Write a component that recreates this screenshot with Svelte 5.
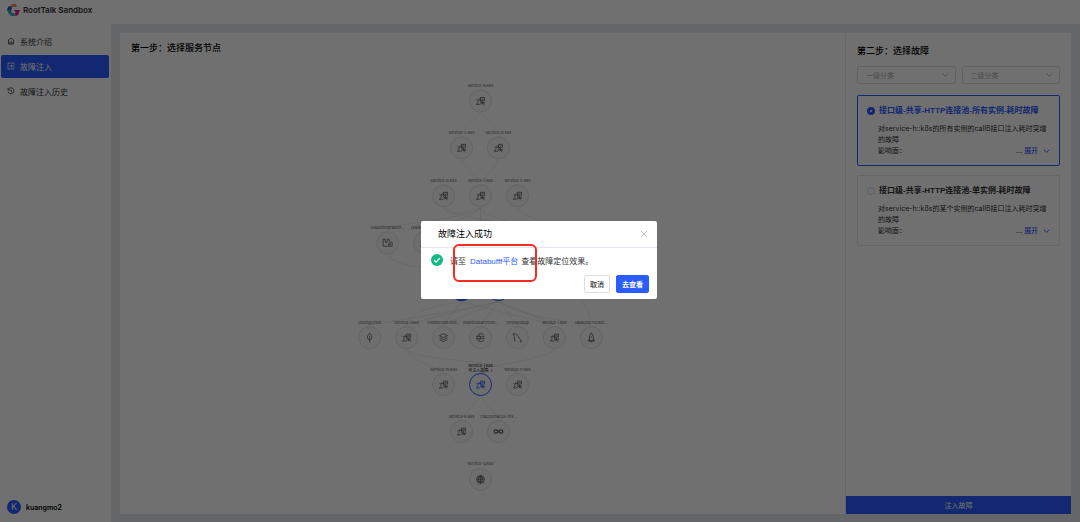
<script>
	const menu = [
		{ label: "系统介绍", icon: "home" },
		{ label: "故障注入", icon: "inject" },
		{ label: "故障注入历史", icon: "history" },
	]
	let current = "故障注入"

	const faults = [
		{ title: "接口级-共享-HTTP连接池-所有实例-耗时故障", desc: "对service-h::k8s的所有实例的callB接口注入耗时突增的故障" },
		{ title: "接口级-共享-HTTP连接池-单实例-耗时故障", desc: "对service-h::k8s的某个实例的callB接口注入耗时突增的故障" },
	]
	let picked = 0
	let open = true

	const nodes = [
		{ x: 361, y: 44, label: "service-a.k8s", icon: "svc" },
		{ x: 342, y: 91, label: "service-c.k8s", icon: "svc" },
		{ x: 379, y: 91, label: "service-d.k8s", icon: "svc" },
		{ x: 324, y: 139, label: "service-b.k8s", icon: "svc" },
		{ x: 361, y: 139, label: "service-f.k8s", icon: "svc" },
		{ x: 398, y: 139, label: "service-o.k8s", icon: "svc" },
		{ x: 268, y: 186, label: "[rabbitmq]rabbit...", icon: "rabbit" },
		{ x: 305, y: 186, label: "[kafka]kafka...", icon: "svc" },
		{ x: 342, y: 233, label: "", icon: "svc", state: "filled" },
		{ x: 379, y: 233, label: "", icon: "svc", state: "active" },
		{ x: 250, y: 281, label: "[mongo]test", icon: "leaf" },
		{ x: 287, y: 281, label: "service-i.k8s", icon: "svc" },
		{ x: 324, y: 281, label: "[redis]redis:test...", icon: "stack" },
		{ x: 361, y: 281, label: "[elasticsearch]es...", icon: "elastic" },
		{ x: 398, y: 281, label: "[mysql]bugl", icon: "mysql" },
		{ x: 435, y: 281, label: "service-l.k8s", icon: "svc" },
		{ x: 472, y: 281, label: "[apache-rocket...", icon: "rocket" },
		{ x: 324, y: 328, label: "service-m.k8s", icon: "svc" },
		{ x: 361, y: 328, label: "service-j.k8s", icon: "svc", state: "active", count: 2 },
		{ x: 398, y: 328, label: "service-n.k8s", icon: "svc" },
		{ x: 342, y: 375, label: "service-k.k8s", icon: "svc" },
		{ x: 379, y: 375, label: "[nacos]nacos-ms...", icon: "loop" },
		{ x: 361, y: 423, label: "service-q.k8s", icon: "globe" },
	]

	const edges = [
		"M361 56L342 75", "M361 56L379 75",
		"M342 103Q345 110 361 124", "M379 103Q377 110 361 124",
		"M324 151Q330 162 361 151", "M324 151Q340 161 398 168",
		"M361 151Q360 158 268 170", "M361 151Q350 164 305 170",
		"M361 151Q364 162 420 170", "M398 151Q400 160 450 172",
		"M361 151V190", "M268 198Q275 208 305 211Q340 214 342 221",
		"M342 245Q290 252 287 268", "M342 245L324 268",
		"M342 245Q390 258 435 268",
		"M379 245Q330 256 250 268", "M379 245Q330 256 287 268",
		"M379 245L324 268", "M379 245L361 268", "M379 245L398 268",
		"M379 245L435 268", "M379 245Q400 260 472 268",
		"M420 198Q440 214 455 234Q470 250 472 268",
		"M287 293Q291 303 324 315", "M287 293Q291 300 361 306",
		"M435 293Q432 300 361 312", "M361 306L398 315",
		"M361 340L342 362", "M361 340L379 362",
	]

	function close() {
		open = false
	}
</script>

<div class="app">
	<header>
		<svg class="logo" viewBox="0 0 13 13">
			<path d="M5 0h4l1 3H6L4 4 3 3z" fill="#f58a6a" />
			<path d="M3 2l2 2-1 3-4-1 1-3z" fill="#2f4fe0" />
			<path d="M0 6l4 1 1 2-3 1z" fill="#18b86c" />
			<path d="M3 9h3l3 3H4L2 10z" fill="#20b8e0" />
			<path d="M7 6h6l-2 5-2 1-2-3h2z" fill="#e0208a" />
		</svg>
		<strong>RootTalk Sandbox</strong>
	</header>

	<div class="body">
		<aside>
			<nav>
				{#each menu as item}
					<a href="#{item.icon}" class:current={item.label === current} on:click={() => current = item.label}>
						<svg viewBox="0 0 16 16">
							{#if item.icon === "home"}
								<path d="M2 7l6-5 6 5M3 6v8h10V6M6 14v-4h4v4" />
							{:else if item.icon === "inject"}
								<path d="M14 5V2H2v12h12v-3M6 8h9M9 5v6" />
							{:else}
								<path d="M3 4a6 6 0 1 1-1 5M2 2v4h4M8 5v4l3 2" />
							{/if}
						</svg>
						{item.label}
					</a>
				{/each}
			</nav>
			<div class="user"><span class="avatar">K</span>kuangmo2</div>
		</aside>

		<main>
			<section class="topology">
				<h2>第一步：选择服务节点</h2>
				<svg class="graph" viewBox="0 0 726 457" preserveAspectRatio="xMidYMin meet">
					{#each edges as d}
						<path class="edge" {d} />
					{/each}
					{#each nodes as node}
						<g class="node {node.state || ''}" transform="translate({node.x} {node.y})">
							<circle class="ring" r="11" />
							<g class="glyph">
								{#if node.icon === "svc"}
									<path d="M-4.500 3.500l2-1.500v-3h3v3l-1.500 1.500h-3M-3-1h-1M0-3.500h4v3h-4zM1-2h2M0 1l4 3M4 1l-3 2.500M2 0v2h2.500M-1-2.500l-1 1" />
								{:else if node.icon === "rabbit"}
									<path d="M-4.500 3.500v-7h2v3h2v-3h2v3h3v4zM1 1h1.500v1.500h-1.500z" />
								{:else if node.icon === "leaf"}
									<path d="M0-4.500q-4.500 4 0 7.500q4.500-3.500 0-7.500zM0-2v7" />
								{:else if node.icon === "stack"}
									<path d="M-4-2l4-2 4 2-4 2zM-4 0l4 2 4-2M-4 2l4 2 4-2" />
								{:else if node.icon === "elastic"}
									<path d="M3.500-2.500a4 4 0 1 0 0 5M-4-1h7.500v2h-7.500M-2-3.500l2 2.500M0 1l-2 2.500M0-1v2" />
								{:else if node.icon === "mysql"}
									<path d="M-2 4q-2-3-1-5l-1.500-3q5 0 6.500 5l2.500 2.500h-2l1 1.500" />
								{:else if node.icon === "rocket"}
									<path d="M0-5q-2.500 3-2 8h4q.5-5-2-8zM-2 1l-1 2.500h6l-1-2.500M0-1.500v1.500M0 3.500v1.500" />
								{:else if node.icon === "loop"}
									<path class="thick" d="M0 0C-1.500-2-4.300-2.500-4.300 0S-1.500 2 0 0S4.300-2.500 4.300 0S1.500 2 0 0" />
								{:else}
									<path d="M-4 0a4 4 0 1 0 8 0a4 4 0 1 0-8 0M-4 0h8M0-4v8M-3-2h6M-3 2h6M0-4q-4 4 0 8q4-4 0-8" />
								{/if}
							</g>
							{#if node.count}
								<text y="-18">{node.label}</text>
								<text y="-13">可注入故障: <tspan class="count">{node.count}</tspan></text>
							{:else}
								<text y="-14">{node.label}</text>
							{/if}
						</g>
					{/each}
				</svg>
			</section>

			<section class="steps">
				<div class="scroll">
					<h2>第二步：选择故障</h2>
					<div class="filters">
						{#each ["一级分类", "二级分类"] as name}
							<div class="select">
								<select aria-label={name}><option>{name}</option></select>
								<svg viewBox="0 0 8 8"><path d="M1 2l3 3 3-3" /></svg>
							</div>
						{/each}
					</div>
					{#each faults as fault, i}
						<div class="fault" class:picked={picked === i}>
							<label>
								<input type="radio" name="fault" value={i} bind:group={picked}>
								{fault.title}
							</label>
							<p>{fault.desc}</p>
							<div class="scope">
								<span>影响面：</span>
								<span>... <button type="button">展开 <svg viewBox="0 0 8 8"><path d="M1 2l3 3 3-3" /></svg></button></span>
							</div>
						</div>
					{/each}
				</div>
				<button type="button" class="submit">注入故障</button>
			</section>
		</main>
	</div>
</div>

{#if open}
	<div class="mask">
		<div class="dialog" role="dialog" aria-labelledby="dialog-title">
			<div class="dialog-head">
				<h3 id="dialog-title">故障注入成功</h3>
				<button type="button" aria-label="关闭" on:click={close}>
					<svg viewBox="0 0 8 8"><path d="M1 1l6 6M7 1l-6 6" /></svg>
				</button>
			</div>
			<div class="message">
				<svg viewBox="0 0 12 12"><circle cx="6" cy="6" r="6" /><path d="M3 6l2 2 4-4" /></svg>
				<span>请至</span>
				<a href="#databuff">Databufff平台</a>
				<span>查看故障定位效果。</span>
				<span class="highlight"></span>
			</div>
			<div class="actions">
				<button type="button" on:click={close}>取消</button>
				<button type="button" class="primary" on:click={close}>去查看</button>
			</div>
		</div>
	</div>
{/if}

<style>
:global(body) {
	font-family: "Liberation Sans", "Noto Sans CJK SC", sans-serif;
	font-size: 8px;
	color: #303133;
}
* {
	box-sizing: border-box;
}
svg {
	fill: none;
	stroke: currentColor;
}
button, select {
	font: inherit;
	color: inherit;
}
h2, h3, p {
	margin: 0;
}
.app {
	min-height: 100vh;
	display: flex;
	flex-direction: column;
	background: #fff;
}
header {
	height: 24px;
	padding: 0 7px 4px;
	display: flex;
	align-items: center;
	gap: 3px;
	font-family: Inter, sans-serif;
}
header strong {
	font-weight: 600;
}
.logo {
	width: 13px;
	height: 13px;
	stroke: none;
}
.body {
	flex: 1;
	display: flex;
}
aside {
	width: 111px;
	padding: 6px 2px 8px 1px;
	display: flex;
	flex-direction: column;
	justify-content: space-between;
}
nav {
	display: flex;
	flex-direction: column;
	gap: 2px;
}
nav a {
	height: 23px;
	padding: 0 6px 1px;
	display: flex;
	align-items: center;
	gap: 5px;
	border-radius: 2px;
	color: #303133;
	text-decoration: none;
}
nav a svg {
	width: 8px;
	height: 8px;
	stroke-width: 1.5;
}
nav a.current {
	background: #2b5cff;
	color: #fff;
}
.user {
	padding-left: 6px;
	display: flex;
	align-items: center;
	gap: 5px;
	font-family: Inter, sans-serif;
	font-size: 7px;
	font-weight: 600;
	color: #000;
}
.avatar {
	width: 14px;
	height: 14px;
	line-height: 14px;
	border-radius: 50%;
	background: #2b5cff;
	color: #fff;
	font-size: 9px;
	font-weight: 400;
	text-align: center;
}
main {
	flex: 1;
	padding: 9px 9px 8px;
	display: flex;
	background: #e6e9ed;
}
h2 {
	font-size: 9px;
	line-height: 12px;
	font-weight: 500;
	color: #000;
}
.topology {
	flex: 1;
	display: flex;
	flex-direction: column;
	border-right: 1px solid #e4e7ed;
	background: #fff;
}
.topology h2 {
	padding: 9px 11px 3px;
}
.graph {
	width: 100%;
	flex: 1;
}
.edge {
	stroke: #dcdfe6;
	stroke-width: 0.5;
}
.ring {
	fill: #fafafa;
	stroke: #e0e2e6;
}
.glyph {
	stroke: #606266;
	stroke-width: 0.8;
}
.thick {
	stroke-width: 1.2;
}
.node text {
	font-family: Inter, "Noto Sans CJK SC", sans-serif;
	font-size: 4px;
	text-anchor: middle;
	fill: #606266;
	stroke: none;
}
.active .ring, .active .glyph {
	stroke: #2b5cff;
}
.filled .ring {
	fill: #2b5cff;
	stroke: #2b5cff;
}
.node.active text {
	fill: #000;
}
.node .count {
	fill: #f22;
}
.steps {
	width: 225px;
	display: flex;
	flex-direction: column;
	background: #fff;
}
.scroll {
	flex: 1;
	padding: 12px 11px 0;
}
.filters {
	margin: 9px 0 11px;
	display: flex;
	gap: 6px;
}
.select {
	flex: 1;
	height: 18px;
	padding-right: 6px;
	display: flex;
	align-items: center;
	border: 1px solid #dcdfe6;
	border-radius: 2px;
	color: #a8abb2;
}
.select select {
	flex: 1;
	padding: 0 8px;
	appearance: none;
	border: 0;
	background: none;
	font-size: 7px;
}
.select svg, .scope svg {
	width: 7px;
	height: 7px;
}
.fault {
	margin-bottom: 9px;
	padding: 9px 8px 9px 9px;
	border: 1px solid #e4e7ed;
	border-radius: 2px;
	font-family: Inter, "Noto Sans CJK SC", sans-serif;
	font-size: 7px;
	line-height: 11px;
}
.fault label {
	display: flex;
	align-items: center;
	gap: 4px;
	font-family: "Liberation Sans", "Noto Sans CJK SC", sans-serif;
	font-size: 8px;
	line-height: 12px;
	font-weight: 700;
	white-space: nowrap;
}
.fault input {
	width: 8px;
	height: 8px;
	margin: 0;
	appearance: none;
	border: 1px solid #dcdfe6;
	border-radius: 50%;
}
.fault input:checked {
	border: 3px solid #2b5cff;
}
.fault p {
	padding: 6px 0 0 11px;
}
.fault.picked {
	border-color: #2b5cff;
}
.picked label {
	color: #2b5cff;
}
.scope {
	padding-left: 11px;
	display: flex;
	justify-content: space-between;
}
.scope button {
	padding: 0;
	border: 0;
	background: none;
	color: #2b5cff;
	font-weight: 500;
}
.scope svg {
	margin: 0 1px 0 3px;
	vertical-align: middle;
}
.submit {
	height: 18px;
	border: 0;
	background: #2b5cff;
	color: #fff;
	font-size: 7px;
}
.mask {
	position: fixed;
	inset: 0;
	display: flex;
	align-items: center;
	justify-content: center;
	background: rgba(0, 0, 0, 0.56);
}
.dialog {
	width: 236px;
	margin: 0 2px 2px 0;
	border-radius: 2px;
	background: #fff;
}
.dialog-head {
	height: 27px;
	padding: 0 9px 1px 17px;
	display: flex;
	align-items: center;
	justify-content: space-between;
	border-bottom: 1px solid #e4e7ed;
}
.dialog-head h3 {
	font-size: 9px;
	font-weight: 400;
	color: #000;
}
.dialog-head button {
	padding: 0;
	display: flex;
	border: 0;
	background: none;
	color: #a8abb2;
}
.dialog-head svg {
	width: 8px;
	height: 8px;
	stroke-width: 0.8;
}
.message {
	position: relative;
	height: 24px;
	padding-left: 10px;
	display: flex;
	align-items: center;
}
.message svg {
	width: 12px;
	height: 12px;
	margin-right: 7px;
	stroke: #fff;
	stroke-width: 1.3;
}
.message circle {
	fill: #10b981;
	stroke: none;
}
.message a {
	margin: 0 3px 0 4px;
	color: #2b5cff;
	text-decoration: none;
}
.highlight {
	position: absolute;
	left: 32px;
	top: -4px;
	width: 84px;
	height: 38px;
	border: 2px solid #f52a20;
	border-radius: 6px;
}
.actions {
	padding: 3px 8px 6px;
	display: flex;
	justify-content: flex-end;
	gap: 6px;
}
.actions button {
	height: 18px;
	padding: 0 5px;
	border: 1px solid #dcdfe6;
	border-radius: 2px;
	background: #fff;
	font-size: 7px;
	font-weight: 500;
}
.actions .primary {
	border-color: #2b5cff;
	background: #2b5cff;
	color: #fff;
	font-weight: 700;
}
</style>
